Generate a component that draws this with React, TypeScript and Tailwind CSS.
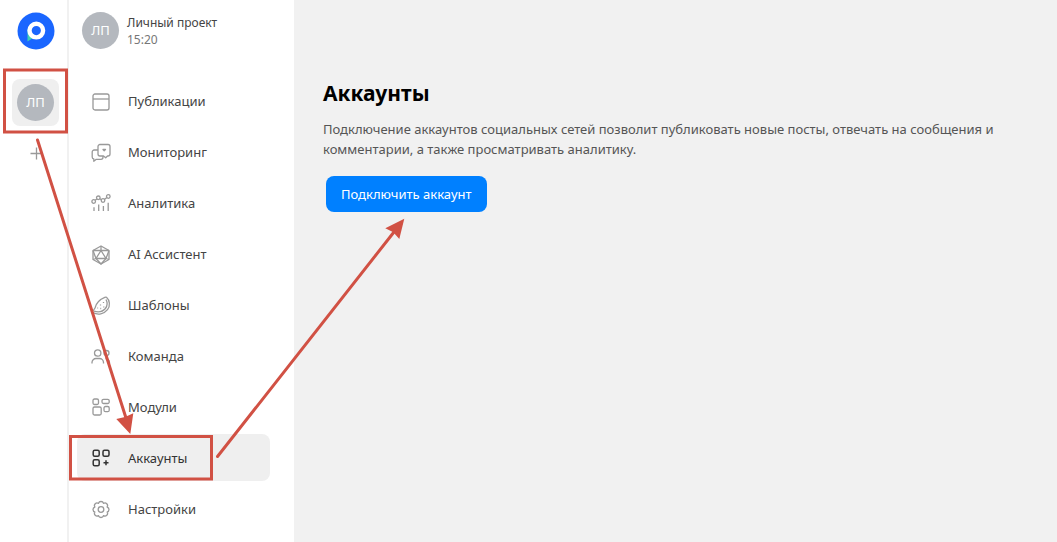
import type { ReactNode } from "react";

type MenuItem = {
  href: string;
  label: string;
  icon: ReactNode;
  active?: boolean;
};

const menuItems: MenuItem[] = [
  {
    href: "#posts",
    label: "Публикации",
    icon: (
      <>
        <rect x="2" y="2" width="16" height="16" rx="2" />
        <path d="M2 7h16" />
      </>
    ),
  },
  {
    href: "#monitoring",
    label: "Мониторинг",
    icon: (
      <>
        <path d="M9 1.500h8a2 2 0 0 1 2 2V11a2 2 0 0 1-2 2h-.5l-1.800 1.800L12.500 13H9a2 2 0 0 1-2-2V3.500a2 2 0 0 1 2-2Z" />
        <path d="M7 7H3.200a2 2 0 0 0-2 2v5a2 2 0 0 0 1.600 2v2.300l2.500-2H10a2 2 0 0 0 2-2V13" />
        <path d="m12 6.500 1.200 1.200 1.300-1.200Z" fill="currentColor" />
      </>
    ),
  },
  {
    href: "#analytics",
    label: "Аналитика",
    icon: (
      <>
        <circle cx="2.7" cy="7.5" r="1.8" />
        <circle cx="7.3" cy="3.8" r="1.8" />
        <circle cx="12" cy="6.5" r="1.8" />
        <circle cx="17.3" cy="2.5" r="1.8" />
        <path d="m4.200 6.300 1.600-1.300M8.900 4.700l1.500.9M13.500 5.400l2.300-1.800" />
        <path d="M3 13.200V17M7.700 10.500V17M12.400 12v5M17.200 8.800V17" />
      </>
    ),
  },
  {
    href: "#assistant",
    label: "AI Ассистент",
    icon: (
      <>
        <path d="m10 1 8 4.500v9L10 19l-8-4.500v-9Z" />
        <path d="m10 5.500 5 8H5Z" />
        <path d="M10 1v4.500M2 5.500h16M2 5.500l3 8-3 1M18 5.500l-3 8 3 1M5 13.500l5 5.500 5-5.500" />
      </>
    ),
  },
  {
    href: "#templates",
    label: "Шаблоны",
    icon: (
      <>
        <path d="M15.500 1.200c3.300 3 4 8.500 1 12.500-3.500 4.500-9.500 5.500-14.500 3-1-1-.5-2 .7-2.700L4 12C5 7.500 8.500 3.500 13.800 1.300c.7-.3 1.200-.4 1.700-.1Z" />
        <path d="M15 3.500c1.600 3 1.500 6.200-.6 9-2.500 3-6.900 4-11.400 2.700" />
        <path d="M12.500 6v.9M9.500 8.500v.9M12.800 10.500v.9M9.300 12.500h.9M6.500 12h.6" />
      </>
    ),
  },
  {
    href: "#team",
    label: "Команда",
    icon: (
      <>
        <circle cx="6.7" cy="6" r="3.2" />
        <path d="M1 16.500v-1a4 4 0 0 1 4-4h3.500a4 4 0 0 1 4 4v1" />
        <circle cx="15.5" cy="6" r="2.5" />
        <path d="M14.500 11.500a4 4 0 0 1 4 4v1" />
      </>
    ),
  },
  {
    href: "#modules",
    label: "Модули",
    icon: (
      <>
        <rect x="2" y="1" width="5.5" height="5.5" rx="1.5" />
        <rect x="11" y="1.3" width="7.2" height="4.2" rx="1.5" />
        <rect x="2" y="9" width="8.2" height="8" rx="1.5" />
        <rect x="13" y="8.5" width="5.2" height="5.2" rx="1.5" />
      </>
    ),
  },
  {
    href: "#accounts",
    label: "Аккаунты",
    active: true,
    icon: (
      <>
        <rect x="2.2" y="1.2" width="6" height="6" rx="1.5" />
        <rect x="12" y="1.2" width="6" height="6" rx="1.5" />
        <rect x="2.2" y="10.7" width="6" height="6" rx="1.5" />
        <path d="M15 11.200v5M12.500 13.700h5" />
      </>
    ),
  },
  {
    href: "#settings",
    label: "Настройки",
    icon: (
      <>
        <circle cx="10" cy="9.5" r="2.8" />
        <path d="M7.500 3.400a2.600 2.600 0 0 1 5 0 2.600 2.600 0 0 1 3.600 3.600 2.600 2.600 0 0 1 0 5 2.600 2.600 0 0 1-3.600 3.600 2.600 2.600 0 0 1-5 0 2.600 2.600 0 0 1-3.600-3.600 2.600 2.600 0 0 1 0-5 2.600 2.600 0 0 1 3.600-3.600Z" />
      </>
    ),
  },
];

function Logo() {
  return (
    <svg viewBox="0 0 38 38" className="size-[38px]" aria-hidden="true">
      <circle cx="19" cy="19" r="18.5" fill="#1a66ff" />
      <path d="M10.500 17v12.500l7-4.500Z" fill="#3fd0b5" />
      <circle cx="19.3" cy="18.6" r="6.8" fill="#1a66ff" stroke="#fff" strokeWidth="4.4" />
    </svg>
  );
}

function Avatar() {
  return (
    <span className="flex size-[37px] shrink-0 items-center justify-center rounded-full bg-[#b4b8be] text-[13px] text-white">
      ЛП
    </span>
  );
}

function Rail() {
  return (
    <aside className="flex w-[69px] shrink-0 flex-col items-center border-r-2 border-[#f1f1f1] pt-3">
      <a href="#home" aria-label="Главная" className="ml-1">
        <Logo />
      </a>
      <button
        type="button"
        aria-label="Личный проект"
        className="mt-[29px] ml-1 flex size-[47px] items-center justify-center rounded-lg bg-[#efefef]"
      >
        <Avatar />
      </button>
      <button
        type="button"
        aria-label="Добавить проект"
        className="mt-[17px] ml-1 flex size-5 items-center justify-center text-[#999]"
      >
        <svg viewBox="0 0 20 20" className="size-5" stroke="currentColor" strokeWidth="1.3">
          <path d="M4.500 10.500h12M10.500 4.500v12" />
        </svg>
      </button>
    </aside>
  );
}

function Sidebar() {
  return (
    <aside className="flex w-[225px] shrink-0 flex-col pt-3">
      <div className="flex items-center gap-2 pl-[13px]">
        <Avatar />
        <div className="text-xs leading-[17px]">
          <p className="text-[#444]">Личный проект</p>
          <p className="text-[#777]">15:20</p>
        </div>
      </div>
      <nav className="mt-7 flex flex-col gap-1 pr-6 pl-2">
        {menuItems.map((item) => (
          <a
            key={item.href}
            href={item.href}
            className={`flex h-[47px] items-center gap-[17px] rounded-lg pt-0.5 pl-3.5 text-[13px] ${
              item.active ? "bg-[#efefef] text-[#333]" : "text-[#444]"
            }`}
          >
            <svg
              viewBox="0 0 20 20"
              className={`size-5 shrink-0 ${item.active ? "text-[#333]" : "text-[#999]"}`}
              fill="none"
              stroke="currentColor"
              strokeWidth={item.active ? 1.5 : 1.3}
              strokeLinejoin="round"
              aria-hidden="true"
            >
              {item.icon}
            </svg>
            {item.label}
          </a>
        ))}
      </nav>
    </aside>
  );
}

// Walkthrough marks drawn over the page: project -> accounts -> connect
function Guide() {
  return (
    <div className="pointer-events-none absolute top-0 left-0" aria-hidden="true">
      <svg width="420" height="500" viewBox="0 0 420 500" fill="none" stroke="#d15144" strokeWidth="3">
        <rect x="4.5" y="70" width="62" height="62" />
        <rect x="70.5" y="436.5" width="141" height="42.5" />
        <g strokeLinecap="round">
          <path d="M37.500 140 126 418" />
          <path d="M217.500 456.500 394 232" />
        </g>
        <g fill="#d15144" stroke="none">
          <path d="m130.300 434-14-15 8.700-2 8.300-3.700Z" />
          <path d="m404.300 218.700-19 9.600 8 4 6 6.700Z" />
        </g>
      </svg>
    </div>
  );
}

export default function App() {
  return (
    <div className="relative flex min-h-screen bg-white font-['Noto_Sans','Open_Sans',sans-serif]">
      <Rail />
      <Sidebar />
      <main className="min-w-0 flex-1 bg-[#f1f1f1] pt-[78px] pr-10 pl-[29px]">
        <h1 className="text-[21px] leading-[30px] font-bold text-black">Аккаунты</h1>
        <p className="mt-[11px] text-[13px] leading-5 text-[#555]">
          Подключение аккаунтов социальных сетей позволит публиковать новые посты, отвечать на сообщения и
          комментарии, а также просматривать аналитику.
        </p>
        <button
          type="button"
          className="mt-[17px] ml-[3px] h-9 rounded-lg bg-[#0080ff] px-[15px] pt-0.5 text-[13px] text-white"
        >
          Подключить аккаунт
        </button>
      </main>
      <Guide />
    </div>
  );
}
